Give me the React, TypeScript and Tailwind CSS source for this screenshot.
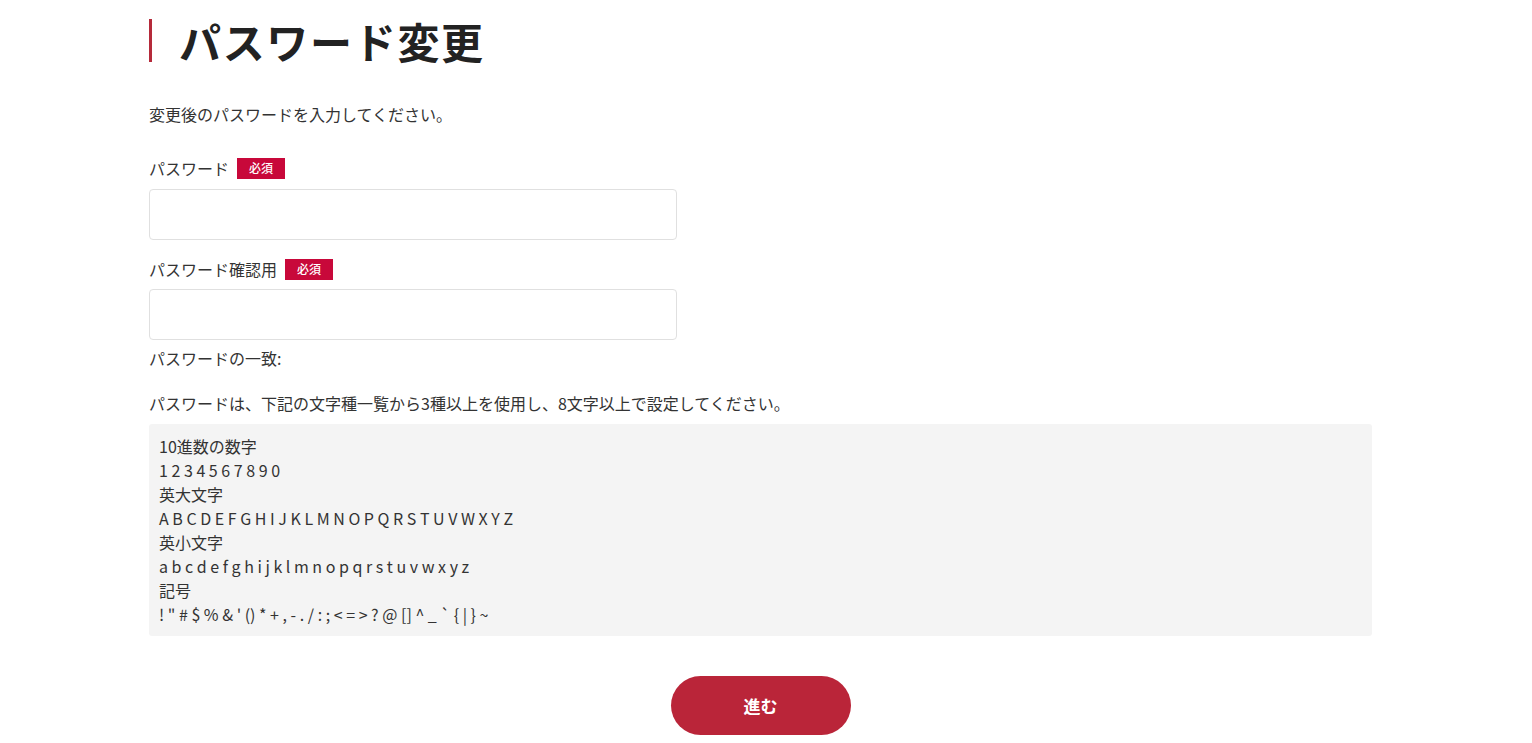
import React from "react";

const font = { fontFamily: '"Noto Sans CJK JP", "Noto Sans", sans-serif' };

function Badge() {
  return (
    <span className="inline-flex h-[21px] w-[48px] items-center justify-center bg-[#c8083a] text-[12px] font-medium leading-none text-white">
      必須
    </span>
  );
}

export default function App() {
  return (
    <div className="min-h-[743px] bg-white text-[#333] font-['Noto_Sans_CJK_JP',sans-serif]" style={font}>
      <div className="ml-[149px] w-[1223px] pt-[19px]">
        <h1 className="flex h-[43px] items-center border-l-[3px] border-[#b52a3a] pl-[27px] text-[42px] font-bold leading-none tracking-[0.04em] text-[#222]">
          パスワード変更
        </h1>

        <p className="mt-[40px] text-[16px] leading-[24px]">変更後のパスワードを入力してください。</p>

        <div className="mt-[30px] flex items-center gap-[8px] text-[16px] leading-[24px]">
          <span>パスワード</span>
          <Badge />
        </div>
        <div className="mt-[9px] h-[51px] w-[528px] rounded-[4px] border border-[#e0e0e0] bg-white" />

        <div className="mt-[17px] flex items-center gap-[8px] text-[16px] leading-[24px]">
          <span>パスワード確認用</span>
          <Badge />
        </div>
        <div className="mt-[8px] h-[51px] w-[528px] rounded-[4px] border border-[#e0e0e0] bg-white" />

        <p className="mt-[6px] text-[16px] leading-[24px]">パスワードの一致:</p>

        <p className="mt-[21px] text-[16px] leading-[24px]">
          パスワードは、下記の文字種一覧から3種以上を使用し、8文字以上で設定してください。
        </p>

        <div className="mt-[9px] rounded-[3px] bg-[#f4f4f4] px-[10px] py-[10px] text-[16px] leading-[24px]">
          <div>10進数の数字</div>
          <div>1 2 3 4 5 6 7 8 9 0</div>
          <div>英大文字</div>
          <div>A B C D E F G H I J K L M N O P Q R S T U V W X Y Z</div>
          <div>英小文字</div>
          <div>a b c d e f g h i j k l m n o p q r s t u v w x y z</div>
          <div>記号</div>
          <div>! &quot; # $ % &amp; &#39; () * + , - . / : ; &lt; = &gt; ? @ [] ^ _ ` {"{"} | {"}"} ~</div>
        </div>

        <div className="mt-[40px] flex justify-center">
          <button className="flex h-[59px] w-[180px] items-center justify-center rounded-full bg-[#ba2539] text-[17px] font-bold text-white">
            進む
          </button>
        </div>
      </div>
    </div>
  );
}
